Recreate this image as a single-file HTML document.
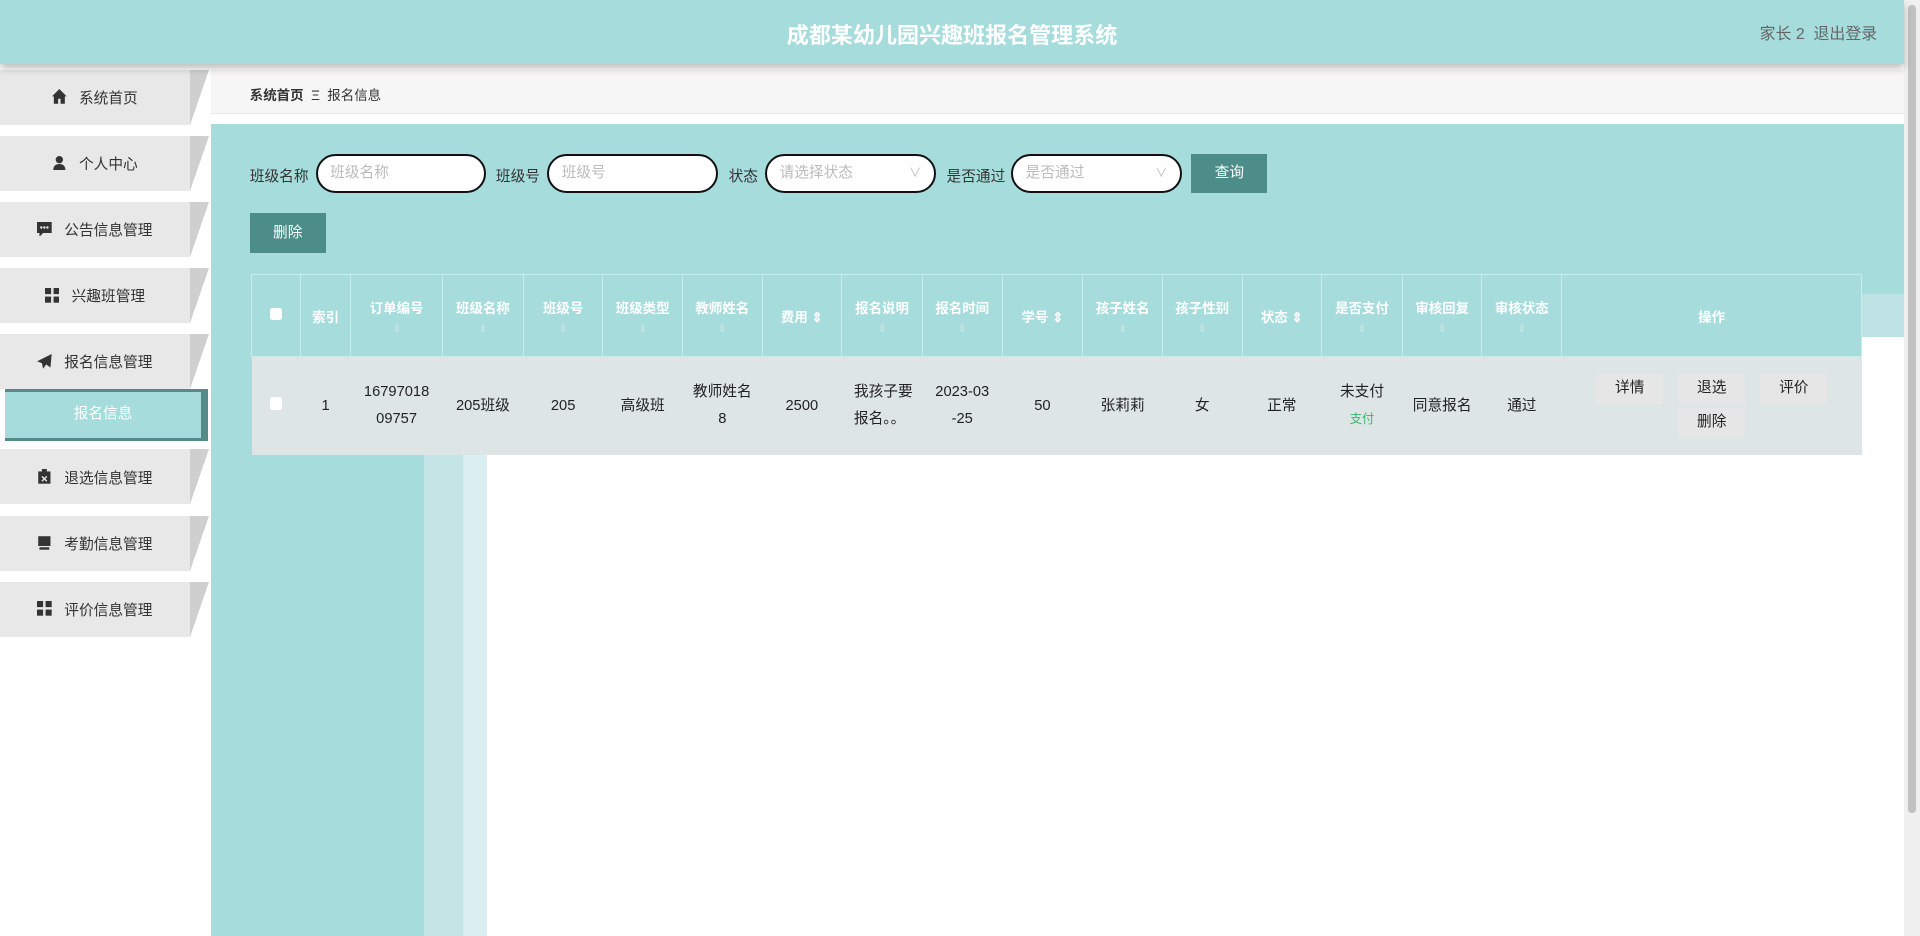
<!DOCTYPE html>
<html><head><meta charset="utf-8"><style>
*{box-sizing:border-box;margin:0;padding:0}
html,body{width:1920px;height:936px;overflow:hidden;background:#fff}
#w{zoom:1.22449;width:1568px;height:764px;position:relative;font-family:"Liberation Sans","Noto Sans CJK SC",sans-serif;font-size:12px;color:#333;overflow:hidden}
.abs{position:absolute}
#hd{left:0;top:0;width:1555px;height:52px;background:#a6dcdc;box-shadow:0 4px 6px rgba(0,0,0,.25);z-index:3}
#hd .t{position:absolute;left:0;right:0;top:15px;text-align:center;color:#fff;font-size:18px;font-weight:bold}
#hd .u{position:absolute;right:22px;top:17px;font-size:13px;color:#666}
.mi{position:absolute;left:0;width:171px;height:45px;background:#e8e8e8}
.mi:after{content:"";position:absolute;right:0;top:0;width:16px;height:45px;background:linear-gradient(to bottom right,#cfcfcf 50%,#fff 50%)}
.mi span{position:absolute;left:0;width:155px;top:14px;text-align:center;font-size:12px;color:#333}
.mi svg{width:12px;height:12px;margin-right:10px;vertical-align:-1px}
#act{left:4px;top:318px;width:166px;height:42px;background:#a6dcdc;border:3px solid #568a88;border-left:0;border-right-width:6px;color:#fff;text-align:center;line-height:36px;font-size:12px}
#bc{left:172px;top:57px;width:1383px;height:36px;background:#f7f6f6;border-bottom:1px solid #e8e8e8}
#bc span{position:absolute;left:32px;top:12px;font-size:11px}
#main{left:172px;top:101px;width:1383px;height:663px;background:#a6dcdc}
.lb{position:absolute;top:135px;font-size:12px;color:#333}
.in{position:absolute;top:126px;height:32px;background:#fff;border:2px solid #111;border-radius:16px;color:#bbb;padding-left:10px;line-height:28px;font-size:12px}
.in b{position:absolute;right:10px;top:0;font-weight:normal;color:#bbb;font-size:10px}
.btn{position:absolute;background:#4c8c89;color:#fff;text-align:center;font-size:12px}
table{position:absolute;left:205px;top:224px;width:1316px;border-collapse:collapse;table-layout:fixed}
th{height:67px;background:#a6dcdc;color:#fff;font-size:11px;font-weight:bold;border:1px solid #c8ecec;vertical-align:middle;text-align:center;position:relative}
th small{display:block;color:#c4e4e4;font-size:8px;margin-top:6px}
td{height:80px;background:#dde6e5;text-align:center;font-size:12px;color:#222;line-height:22px}
.cb{display:inline-block;width:10px;height:10px;background:#fff;border-radius:2px}
.op{display:inline-block;width:55px;height:24px;line-height:24px;background:#e6e6e6;margin:2px 6px;font-size:12px}
</style></head><body><div id="w">
<div id="hd" class="abs"><div class="t">成都某幼儿园兴趣班报名管理系统</div><div class="u">家长 2 &nbsp;退出登录</div></div>
<div class="mi" style="top:57px"><span><svg viewBox="0 0 12 12"><path d="M6 0L0 6h1.5v6h3.5V8h2v4h3.5V6H12z" fill="#333"/></svg>系统首页</span></div>
<div class="mi" style="top:111px"><span><svg viewBox="0 0 12 12"><circle cx="6" cy="3" r="3" fill="#333"/><path d="M1 12c0-4 2-5.5 5-5.5s5 1.5 5 5.5z" fill="#333"/></svg>个人中心</span></div>
<div class="mi" style="top:165px"><span><svg viewBox="0 0 12 12"><path d="M0 0h12v9H5l-3 3V9H0z" fill="#333"/><circle cx="3.5" cy="4.5" r="1" fill="#e8e8e8"/><circle cx="6" cy="4.5" r="1" fill="#e8e8e8"/><circle cx="8.5" cy="4.5" r="1" fill="#e8e8e8"/></svg>公告信息管理</span></div>
<div class="mi" style="top:219px"><span><svg viewBox="0 0 12 12"><rect width="5" height="5" fill="#333"/><rect x="7" width="5" height="5" fill="#333"/><rect y="7" width="5" height="5" fill="#333"/><rect x="7" y="7" width="5" height="5" fill="#333"/></svg>兴趣班管理</span></div>
<div class="mi" style="top:273px"><span><svg viewBox="0 0 12 12"><path d="M12 0L0 6l4 1.5L5 12l2.5-3.5L11 11z" fill="#333"/></svg>报名信息管理</span></div>
<div id="act" class="abs">报名信息</div>
<div class="mi" style="top:367px"><span><svg viewBox="0 0 12 12"><path d="M1 2h10v10H1z" fill="#333"/><rect x="4" y="0" width="4" height="3" fill="#333"/><path d="M4 6l4 4M8 6l-4 4" stroke="#e8e8e8" stroke-width="1.2"/></svg>退选信息管理</span></div>
<div class="mi" style="top:421px"><span><svg viewBox="0 0 12 12"><path d="M1 1h10v8H1z" fill="#333"/><rect x="2" y="10" width="8" height="2" fill="#333"/></svg>考勤信息管理</span></div>
<div class="mi" style="top:475px"><span><svg viewBox="0 0 12 12"><rect width="5" height="5" fill="#333"/><rect x="7" width="5" height="5" fill="#333"/><rect y="7" width="5" height="5" fill="#333"/><rect x="7" y="7" width="5" height="5" fill="#333"/></svg>评价信息管理</span></div>
<div id="bc" class="abs"><span><b>系统首页</b> &nbsp;Ξ&nbsp; 报名信息</span></div>
<div id="main" class="abs"></div>
<div class="abs" style="left:346px;top:371px;width:32px;height:393px;background:#c4e4e6"></div>
<div class="abs" style="left:378px;top:371px;width:20px;height:393px;background:#d8eef0"></div>
<div class="abs" style="left:398px;top:371px;width:1157px;height:393px;background:#fff"></div>
<div class="abs" style="left:1521px;top:240px;width:34px;height:35px;background:#bfe3e4"></div>
<div class="abs" style="left:1521px;top:275px;width:34px;height:489px;background:#fff"></div>
<div class="abs" style="left:1555px;top:0;width:13px;height:764px;background:#f0f0f0"><div style="margin:4px 3px;height:660px;background:#c1c1c1;border-radius:3px"></div></div>
<div class="lb" style="left:204px">班级名称</div>
<div class="in" style="left:258px;width:139px">班级名称</div>
<div class="lb" style="left:405px">班级号</div>
<div class="in" style="left:447px;width:139px">班级号</div>
<div class="lb" style="left:595px">状态</div>
<div class="in" style="left:625px;width:139px">请选择状态<b>∨</b></div>
<div class="lb" style="left:773px">是否通过</div>
<div class="in" style="left:826px;width:139px">是否通过<b>∨</b></div>
<div class="btn" style="left:973px;top:126px;width:62px;height:32px;line-height:32px">查询</div>
<div class="btn" style="left:204px;top:174px;width:62px;height:33px;line-height:33px">删除</div>
<table>
<colgroup><col style="width:40px"><col style="width:41px"><col style="width:75px"><col style="width:66px"><col style="width:65px"><col style="width:65px"><col style="width:65px"><col style="width:65px"><col style="width:66px"><col style="width:65px"><col style="width:66px"><col style="width:65px"><col style="width:65px"><col style="width:65px"><col style="width:66px"><col style="width:65px"><col style="width:65px"><col></colgroup>
<tr><th><span class="cb"></span></th><th>索引</th><th>订单编号<small>⇕</small></th><th>班级名称<small>⇕</small></th><th>班级号<small>⇕</small></th><th>班级类型<small>⇕</small></th><th>教师姓名<small>⇕</small></th><th>费用 ⇕</th><th>报名说明<small>⇕</small></th><th>报名时间<small>⇕</small></th><th>学号 ⇕</th><th>孩子姓名<small>⇕</small></th><th>孩子性别<small>⇕</small></th><th>状态 ⇕</th><th>是否支付<small>⇕</small></th><th>审核回复<small>⇕</small></th><th>审核状态<small>⇕</small></th><th>操作</th></tr>
<tr><td><span class="cb"></span></td><td>1</td><td>16797018<br>09757</td><td>205班级</td><td>205</td><td>高级班</td><td>教师姓名<br>8</td><td>2500</td><td style="text-align:left;padding-left:10px">我孩子要<br>报名。。</td><td>2023-03<br>-25</td><td>50</td><td>张莉莉</td><td>女</td><td>正常</td><td>未支付<br><span style="color:#3cb371;font-size:10px">支付</span></td><td>同意报名</td><td>通过</td><td style="line-height:24px"><span class="op">详情</span><span class="op">退选</span><span class="op">评价</span><br><span class="op">删除</span></td></tr>
</table>
</div></body></html>
